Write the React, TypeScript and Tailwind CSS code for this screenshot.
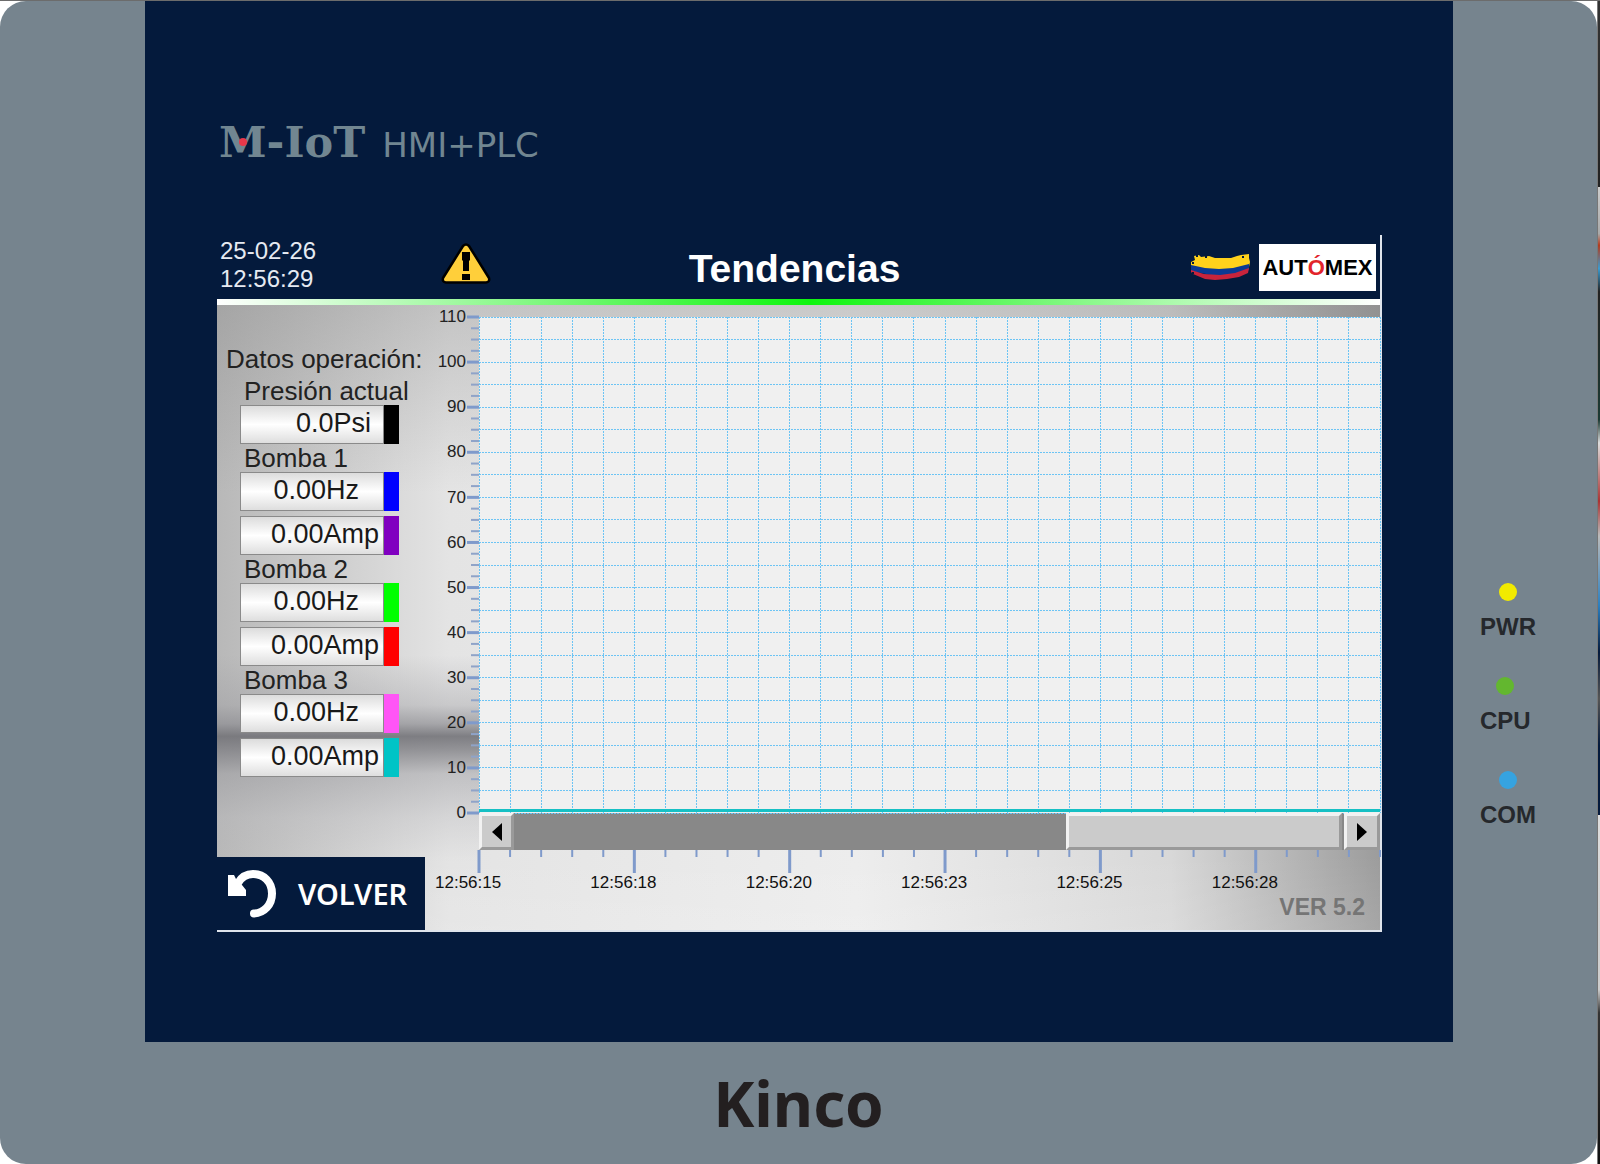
import React from 'react';
import clsx from 'clsx';

interface Reading {
  id: string;
  name: string;
  value: string;
  pad: string;
  color: string;
}

interface ReadingGroup {
  title: string;
  readings: Reading[];
}

const groups: ReadingGroup[] = [
  {
    title: 'Presión actual',
    readings: [{ id: 'psi', name: 'Presión', value: '0.0Psi', pad: 'pr-3', color: 'bg-black' }],
  },
  {
    title: 'Bomba 1',
    readings: [
      { id: 'hz1', name: 'Frecuencia', value: '0.00Hz', pad: 'pr-6', color: 'bg-[#0000ff]' },
      { id: 'amp1', name: 'Corriente', value: '0.00Amp', pad: 'pr-1', color: 'bg-[#8000c0]' },
    ],
  },
  {
    title: 'Bomba 2',
    readings: [
      { id: 'hz2', name: 'Frecuencia', value: '0.00Hz', pad: 'pr-6', color: 'bg-[#00ff00]' },
      { id: 'amp2', name: 'Corriente', value: '0.00Amp', pad: 'pr-1', color: 'bg-[#ff0000]' },
    ],
  },
  {
    title: 'Bomba 3',
    readings: [
      { id: 'hz3', name: 'Frecuencia', value: '0.00Hz', pad: 'pr-6', color: 'bg-[#ff55f6]' },
      { id: 'amp3', name: 'Corriente', value: '0.00Amp', pad: 'pr-1', color: 'bg-[#00c4c6]' },
    ],
  },
];

const leds = [
  { label: 'PWR', color: 'bg-[#f2ea00]' },
  { label: 'CPU', color: 'bg-[#63b72f]' },
  { label: 'COM', color: 'bg-[#36a3e0]' },
];

const yLabels = [110, 100, 90, 80, 70, 60, 50, 40, 30, 20, 10, 0];
const xLabels = ['12:56:15', '12:56:18', '12:56:20', '12:56:23', '12:56:25', '12:56:28'];

const COLS = 29;
const ROWS = 22;

const range = (n: number) => Array.from({ length: n }, (_, i) => i);
const pct = (i: number, total: number) => `${(i / total) * 100}%`;

const WarningIcon = () => (
  <svg viewBox="0 0 50 41" className="h-[41px] w-[50px]" aria-hidden="true">
    <path
      d="M22 3Q25 0 28 3L48 35Q49 39 45 39.500H5Q1 39 2 35Z"
      fill="#ffcf3a"
      stroke="#000"
      strokeWidth="2.500"
      strokeLinejoin="round"
    />
    <path d="M21 9h8v8l-1 1v10h-6V18l-1-1Z" fill="#000" />
    <rect x="21" y="31" width="8" height="6" fill="#000" />
  </svg>
);

const FlagIcon = () => (
  <svg viewBox="0 0 60 27" className="h-[27px] w-[60px]" aria-hidden="true">
    <path d="M4 2l5-1 2 2 8-1 6 2h16l6-2 4-1 8-1v4l1 4-1 5-9 3-12 1-20-1L1 13V8l4-2Z" fill="#ffd21c" />
    <path d="M1 11l14 3 14 1 14-1 16-4v6l-8 4-16 2-14-1L1 17Z" fill="#0b3a93" />
    <path d="M1 16l13 4 16 1 15-2 14-5-1 5-9 4-12 2-12 1-10-1-12-5-2-2Z" fill="#c8243c" />
    <path d="M6 1h2v2H6zM2 8h2v2H2zM15 2h2v2h-2zM2 18h2v2H2zM52 2h2v2h-2z" fill="#041a3c" />
  </svg>
);

const BackIcon = () => (
  <svg viewBox="0 0 50 50" className="h-[50px] w-[50px]" aria-hidden="true">
    <path
      d="M11 14C15 7 20 5 26 5C37 5 45 13 45 24.500C45 36 37 44 27 44.500"
      fill="none"
      stroke="#fff"
      strokeWidth="8"
      strokeLinecap="round"
    />
    <path d="M1 6h6l2 4 6 6 4 5v6H1Z" fill="#fff" />
  </svg>
);

const ReadingRow = ({ id, name, value, pad, color, group }: Reading & { group: string }) => (
  <div className="flex h-[39px]">
    <output
      id={id}
      aria-label={`${group} ${name}`}
      className={clsx(
        'w-[144px] border border-[#8a8a8a] bg-linear-to-b from-[#dcdcdc] via-white to-[#dedede] text-right text-[27px] leading-[34px] text-[#1a1a1a]',
        pad
      )}
    >
      {value}
    </output>
    <span className={clsx('w-[15px]', color)} />
  </div>
);

const ScreenHeader = () => (
  <header className="grid h-16 grid-cols-[1fr_auto_1fr] text-white">
    <div className="flex items-start">
      <div className="pt-0.5 pl-[3px] text-2xl leading-7 text-[#e6eaf2]">
        <div>25-02-26</div>
        <div>12:56:29</div>
      </div>
      <div className="mt-2 ml-[125px]">
        <WarningIcon />
      </div>
    </div>
    <h1 className="mr-2 pt-3 text-[39px] leading-[44px] font-bold">Tendencias</h1>
    <div className="flex items-center justify-end gap-[9px] pr-1">
      <FlagIcon />
      <div className="flex h-[47px] w-[117px] items-center justify-center bg-white text-[22px] font-bold text-black">
        <span>
          AUT<span className="text-[#e2242b]">Ó</span>MEX
        </span>
      </div>
    </div>
  </header>
);

const SidePanel = () => (
  <aside className="flex flex-col">
    <div className="flex-1 pt-10 text-[26px] leading-7 text-[#222]">
      <h2 className="mb-1 pl-[9px] whitespace-nowrap">Datos operación:</h2>
      {groups.map(group => (
        <section key={group.title} className="pl-[23px]">
          <h3 className="pl-1 whitespace-nowrap">{group.title}</h3>
          <div className="flex flex-col gap-[5px]">
            {group.readings.map(reading => (
              <ReadingRow key={reading.id} group={group.title} {...reading} />
            ))}
          </div>
        </section>
      ))}
    </div>
    <button type="button" className="flex h-[73px] items-center gap-[21px] bg-[#041a3c] pl-2.5 text-white">
      <BackIcon />
      <span className="font-['Noto_Sans'] text-[29px] leading-9 font-semibold">VOLVER</span>
    </button>
  </aside>
);

const YAxis = () => (
  <div className="flex h-[496px]">
    <div className="flex w-[41px] flex-col justify-between text-right text-[17px] text-[#222]">
      {yLabels.map(label => (
        <div key={label} className="flex h-0 items-center justify-end">
          {label}
        </div>
      ))}
    </div>
    <svg className="h-full w-[13px] overflow-visible" aria-hidden="true">
      {range(ROWS * 2 + 1).map(i => (
        <line
          key={i}
          x1={i % 4 === 0 ? 1 : 5}
          x2="13"
          y1={pct(i, ROWS * 2)}
          y2={pct(i, ROWS * 2)}
          stroke={i % 4 === 0 ? '#7f9acb' : '#8fa3c8'}
          strokeWidth={i % 4 === 0 ? 3 : 2}
        />
      ))}
    </svg>
  </div>
);

const Plot = () => (
  <svg className="block h-[496px] w-full overflow-visible bg-[#f0f0f0]" role="img" aria-label="Tendencias">
    <g stroke="#6cc4f4" strokeWidth="1" strokeDasharray="2 1" shapeRendering="crispEdges">
      {range(COLS + 1).map(i => (
        <line key={`c${i}`} x1={pct(i, COLS)} x2={pct(i, COLS)} y1="0" y2="100%" />
      ))}
      {range(ROWS + 1).map(i => (
        <line key={`r${i}`} x1="0" x2="100%" y1={pct(i, ROWS)} y2={pct(i, ROWS)} />
      ))}
    </g>
    <rect x="0" y="492" width="100%" height="3" fill="#16c0c4" />
  </svg>
);

const bevel = 'border-3 border-t-[#f2f2f2] border-l-[#f2f2f2] border-r-[#9a9a9a] border-b-[#9a9a9a] bg-[#cbcbcb]';

const ScrollBar = () => (
  <div className="flex h-[37px] bg-[#888]">
    <button type="button" aria-label="Anterior" className={clsx('flex w-[35px] items-center justify-center', bevel)}>
      <svg viewBox="0 0 10 18" className="h-[18px] w-2.5" aria-hidden="true">
        <path d="M10 0v18L0 9Z" />
      </svg>
    </button>
    <div className="flex flex-1 justify-end pr-0.5">
      <div className={clsx('w-1/3', bevel)} />
    </div>
    <button type="button" aria-label="Siguiente" className={clsx('flex w-[36px] items-center justify-center', bevel)}>
      <svg viewBox="0 0 10 18" className="h-[18px] w-2.5" aria-hidden="true">
        <path d="M0 0v18l10-9Z" />
      </svg>
    </button>
  </div>
);

const XAxis = () => (
  <div>
    <svg className="block h-[23px] w-full overflow-visible" aria-hidden="true">
      {range(COLS + 1).map(i => (
        <line
          key={i}
          x1={pct(i, COLS)}
          x2={pct(i, COLS)}
          y1="0"
          y2={i % 5 === 0 ? 23 : 7}
          stroke="#7f9acb"
          strokeWidth={i % 5 === 0 ? 3 : 2}
        />
      ))}
    </svg>
    {/* Five of the 29 columns per label, the last one hangs on its tick */}
    <div className="flex text-[17px] leading-5 text-[#111]">
      {xLabels.map(label => (
        <div key={label} className="w-5/29 shrink-0 last:w-0">
          <span className="-ml-11">{label}</span>
        </div>
      ))}
    </div>
  </div>
);

const TrendChart = () => (
  <main className="flex pt-3">
    <YAxis />
    <div className="min-w-0 flex-1">
      <Plot />
      <ScrollBar />
      <XAxis />
      <div className="pr-[15px] text-right text-[23px] leading-7 font-bold text-[#757575]">VER 5.2</div>
    </div>
  </main>
);

const Screen = () => (
  <div className="border-r-2 border-b-2 border-[#dfe4ec] font-['Liberation_Sans',sans-serif]">
    <ScreenHeader />
    <div className="h-1.5 bg-[linear-gradient(to_right,#fff,#8cf88c_25%,#0ff50f_51%,#8cf88c_75%,#fff)]" />
    <div className="bg-[linear-gradient(to_bottom,rgba(120,120,120,.3),transparent_30%,transparent_88%,rgba(255,255,255,.1)),linear-gradient(to_right,#b8b8b8,#e4e4e4_20%,#ededed_55%,#d8d8d8_82%,#9c9c9c)]">
      <div className="grid h-[625px] grid-cols-[208px_1fr] bg-[linear-gradient(to_bottom,transparent_56%,rgba(150,150,155,.35)_64%,rgba(140,140,145,.7)_67%,rgba(115,115,120,.9)_69%,rgba(125,125,130,.8)_71%,rgba(150,150,155,.45)_75%,rgba(180,180,184,.3)_82%,transparent_89%)] bg-[length:262px_100%] bg-no-repeat">
        <SidePanel />
        <TrendChart />
      </div>
    </div>
  </div>
);

const Leds = () => (
  <div className="flex flex-col items-start gap-[38px] pt-[582px] pl-[27px] font-['Liberation_Sans',sans-serif]">
    {leds.map(led => (
      <div key={led.label} className="flex flex-col items-center gap-3.5">
        <span className={clsx('size-[18px] rounded-full', led.color)} />
        <span className="text-2xl leading-6 font-bold text-[#25282c]">{led.label}</span>
      </div>
    ))}
  </div>
);

const Brand = () => (
  <div className="flex items-baseline gap-[17px] pb-[66px] pl-0.5 leading-[48px] text-[#718691]">
    <span className="relative font-['DejaVu_Serif',serif] text-[43px] font-bold">
      M-IoT
      <span className="absolute top-5 left-5 size-2 rounded-full bg-[#e8384a]" />
    </span>
    <span className="font-['DejaVu_Sans',sans-serif] text-[34px]">HMI+PLC</span>
  </div>
);

export const App: React.FC = () => (
  <div className="flex min-h-screen border-t border-[#6c6c6c] bg-white">
    <div className="flex flex-1 flex-col rounded-[26px] bg-[#76848e]">
      <div className="grid grid-cols-[145px_1fr_144px]">
        <div />
        <div className="bg-[#041a3c] pt-[117px] pr-[71px] pb-[110px] pl-[72px]">
          <Brand />
          <Screen />
        </div>
        <Leds />
      </div>
      <footer className="flex flex-1 items-center justify-center font-['Noto_Sans',sans-serif] text-[62px] leading-[64px] font-bold text-[#231f20]">
        Kinco
      </footer>
    </div>
    {/* Sliver of the desktop behind the panel */}
    <div className="w-[3px] border-l border-[#777] bg-[linear-gradient(to_bottom,#333_0,#222_16%,#ccc_16%,#aaa_20%,#b43a1c_21%,#3a9bd0_23%,#222_25%,#1c3a34_36%,#ddd_38%,#a33_43%,#bbb_46%,#2b7fc0_52%,#041a3c_56%,#555_60%,#041a3c_64%,#041a3c_70%,#ddd_70%,#ccc_85%,#333_87%,#111)]" />
  </div>
);

export default App;
